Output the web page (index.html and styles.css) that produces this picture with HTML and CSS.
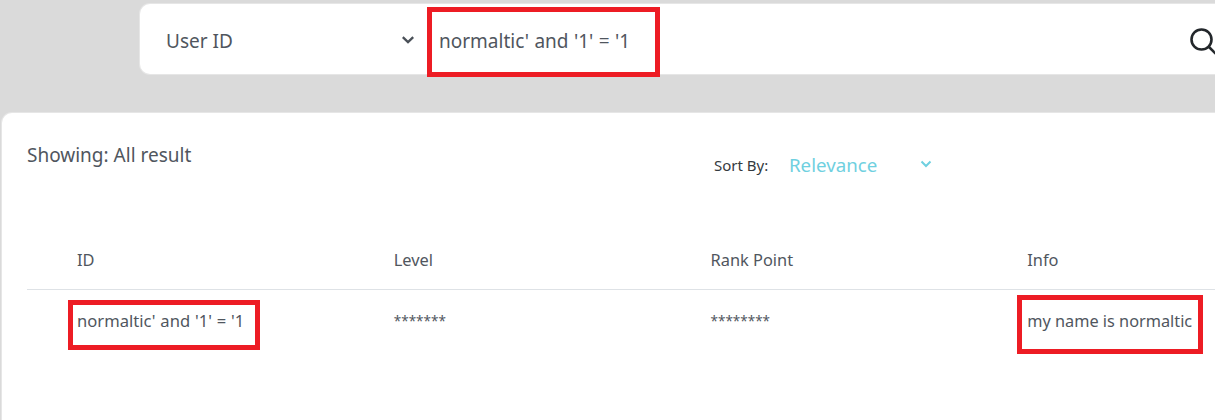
FILE: index.html
```html
<!doctype html>
<html lang="en">
<head>
	<meta charset="UTF-8">
	<title>Search result</title>
	<link rel="stylesheet" href="styles.css">
</head>
<body>
	<div class="page">
		<form class="search" action="" method="get">
			<div class="search-type">
				<span>User ID</span>
				<svg class="chev" width="14" height="8" viewBox="0 0 14 8"><path d="M1.800 1.200 7 6.200l5.200-5" fill="none" stroke="#4a5058" stroke-width="2.300"/></svg>
			</div>
			<div class="search-text">normaltic' and '1' = '1</div>
			<svg class="search-icon" width="30" height="30" viewBox="0 0 30 30"><circle cx="12.500" cy="12.500" r="10" fill="none" stroke="#23272b" stroke-width="2.600"/><path d="M19.500 19.500 27 27" fill="none" stroke="#23272b" stroke-width="2.600"/></svg>
		</form>

		<div class="result">
			<div class="result-top">
				<div class="showing">Showing: All result</div>
				<div class="sort">
					<span class="sort-label">Sort By:</span>
					<span class="sort-value">Relevance</span>
					<svg class="chev" width="12" height="8" viewBox="0 0 12 8"><path d="M1.500 1.500 6 6l4.500-4.500" fill="none" stroke="#6fd0e0" stroke-width="2"/></svg>
				</div>
			</div>
			<table class="rank">
				<thead>
					<tr><th>ID</th><th>Level</th><th>Rank Point</th><th>Info</th></tr>
				</thead>
				<tbody>
					<tr>
						<td class="dark id">normaltic' and '1' = '1</td>
						<td>*******</td>
						<td>********</td>
						<td class="dark">my name is normaltic</td>
					</tr>
				</tbody>
			</table>
		</div>

		<!-- red marks drawn over the capture -->
		<div class="mark mark-search"></div>
		<div class="mark mark-id"></div>
		<div class="mark mark-info"></div>
	</div>
</body>
</html>
```

FILE: styles.css
```css
html, body { margin: 0; padding: 0; }
body { font-family: "Noto Sans", "Open Sans", sans-serif; color: #50565e; background: #dadada; }

.page { position: relative; width: 1215px; height: 420px; overflow: hidden; background: #dadada; }

.search { display: flex; align-items: center; height: 70px; margin: 4px -20px 0 140px; background: #fff; border-radius: 10px; box-shadow: 0 0 0 1px #e6e6e6; font-size: 19px; }
.search-type { display: flex; align-items: center; justify-content: space-between; width: 275px; padding: 3px 0 0 26px; box-sizing: border-box; }
.search-text { margin: 3px 0 0 24px; word-spacing: 0.500px; }
.search-icon { margin: 5px 16px 0 auto; flex: none; }
.search-type .chev { margin-top: -1px; }

.result { margin: 39px 0 0 2px; height: 320px; padding: 0 0 0 25px; background: #fff; border-radius: 10px 0 0 0; box-shadow: 0 0 0 1px #e6e6e6; }
.result-top { display: flex; height: 106px; }
.showing { width: 687px; padding-top: 29px; font-size: 19px; line-height: 26px; }
.sort { display: flex; align-items: center; height: 26px; margin-top: 39px; }
.sort-label { width: 75px; font-size: 15px; color: #343a40; }
.sort-value { width: 131px; margin-top: -2px; font-size: 18.700px; color: #6fd0e0; }
.sort .chev { margin-top: -3px; }

.rank { border-collapse: collapse; table-layout: fixed; width: 1267px; font-size: 16.400px; }
.rank th { height: 70px; padding: 12px 0 0 50px; box-sizing: border-box; font-weight: 400; text-align: left; border-bottom: 1px solid #dee2e6; }
.rank td { padding: 20px 0 0 50px; line-height: 22px; vertical-align: top; font-size: 13.500px; }
.rank td.dark { font-size: 16.300px; }
.rank td.id { font-size: 16.600px; word-spacing: 0.500px; }

.mark { position: absolute; border: 5px solid #ed1c24; box-sizing: border-box; }
.mark-search { left: 427px; top: 7px; width: 233px; height: 70px; }
.mark-id { left: 68px; top: 300px; width: 192px; height: 50px; }
.mark-info { left: 1017px; top: 295px; width: 186px; height: 59px; }
```
